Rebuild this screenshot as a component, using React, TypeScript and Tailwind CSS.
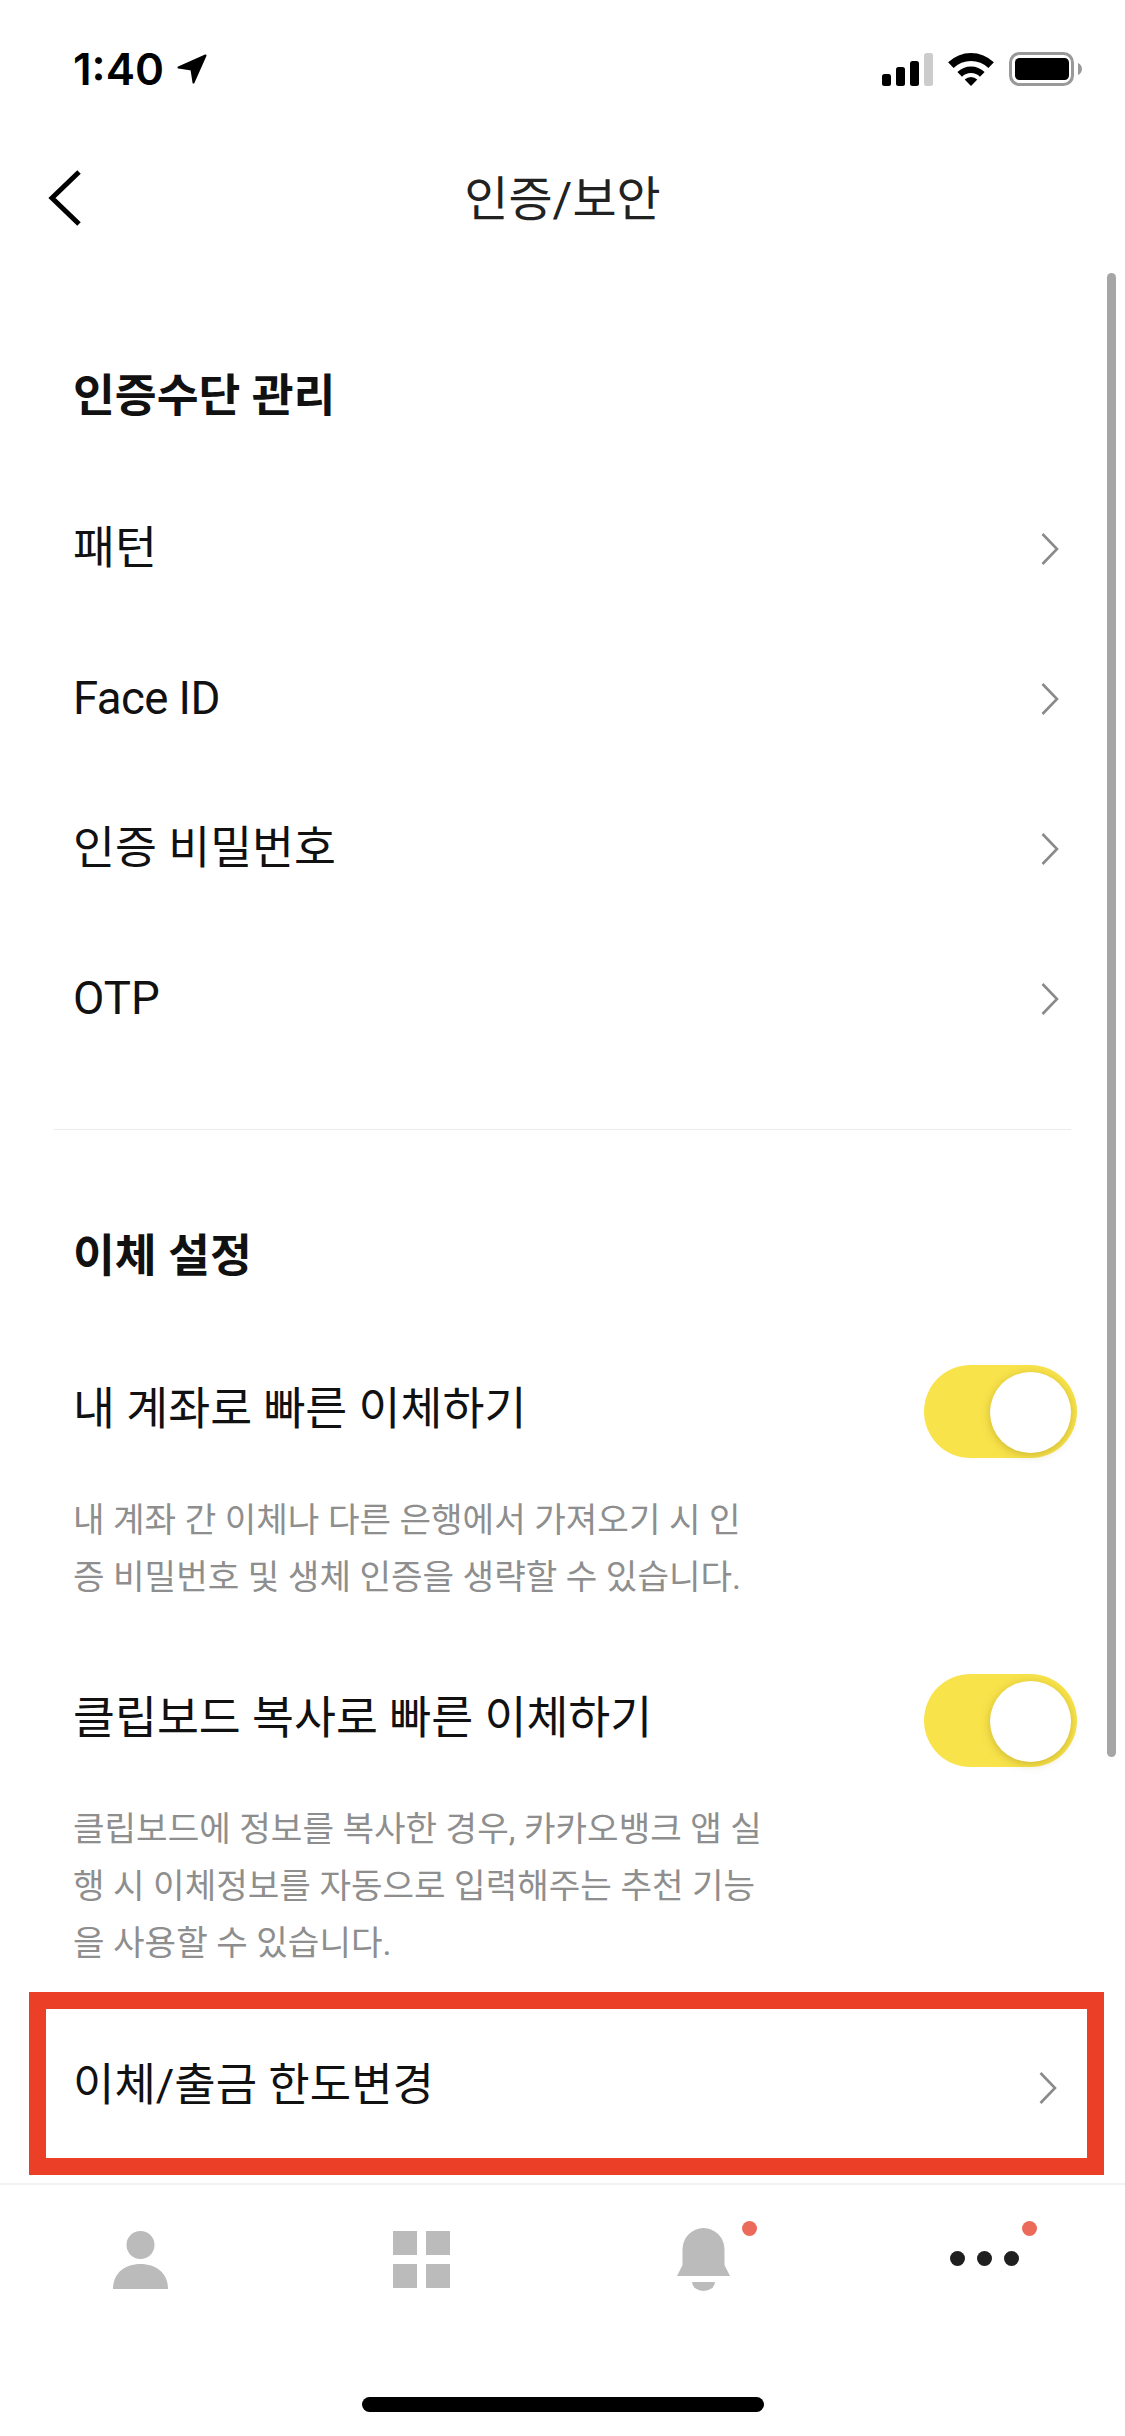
const kr = 'Roboto, "Noto Sans CJK KR", "Noto Sans", sans-serif';

function Chevron() {
  return (
    <svg width="20" height="34" viewBox="0 0 20 34" className="mt-[8px] shrink-0">
      <path d="M2.5 2 L17 17 L2.5 32" fill="none" stroke="#8a8a8a" strokeWidth="2.6" />
    </svg>
  );
}

function LinkRow({ label, tight }: { label: string; tight?: boolean }) {
  return (
    <div className="flex h-[150px] items-center justify-between pl-[73px] pr-[65px]">
      <span className={tight ? 'pt-[9px] text-[45.6px] tracking-[-0.6px] text-[#111]' : 'pt-[9px] text-[45.6px] text-[#111]'}>{label}</span>
      <Chevron />
    </div>
  );
}

function Toggle() {
  return (
    <div className="relative mt-[13px] h-[93px] w-[153px] shrink-0 rounded-full bg-[#f9e34b]">
      <div className="absolute left-[66px] top-[7px] h-[81px] w-[81px] rounded-full bg-white shadow-[0_2px_10px_rgba(120,100,0,0.35)]" />
    </div>
  );
}

function ToggleRow({ label }: { label: string }) {
  return (
    <div className="flex h-[150px] items-center justify-between pl-[73px] pr-[48px]">
      <span className="pt-[11px] text-[45.6px] text-[#111]">{label}</span>
      <Toggle />
    </div>
  );
}

function Heading({ children }: { children: string }) {
  return (
    <div className="flex h-[150px] items-center pl-[73px] pt-[4px] text-[45.5px] font-bold text-[#111]">{children}</div>
  );
}

function StatusBar() {
  return (
    <div className="flex h-[132px] items-start justify-between pl-[73px] pr-[43px] pt-[41px]">
      <div className="flex items-center gap-[13px]">
        <span className="text-[44px] font-semibold leading-[56px] text-black" style={{ fontFamily: 'Inter, sans-serif' }}>1:40</span>
        <svg width="30" height="30" viewBox="0 0 30 30">
          <path d="M28.500 1.500 L1.500 13.500 L14.500 15.500 L16.500 28.500 Z" fill="#000" stroke="#000" strokeWidth="2" strokeLinejoin="round" />
        </svg>
      </div>
      <div className="flex items-center gap-[15px] pt-[11px]">
        <svg width="51" height="33" viewBox="0 0 51 33">
          <rect x="0" y="21" width="9" height="12" rx="2.5" fill="#000" />
          <rect x="14" y="14" width="9" height="19" rx="2.5" fill="#000" />
          <rect x="28" y="8" width="9" height="25" rx="2.5" fill="#000" />
          <rect x="42" y="0" width="9" height="33" rx="2.5" fill="#ccc" />
        </svg>
        <svg width="46" height="33" viewBox="0 0 46 33">
          <path d="M0.1 9.3 A33 33 0 0 1 45.9 9.3 L40.4 15 A25 25 0 0 0 5.6 15 Z" fill="#000" />
          <path d="M9.4 19 A19.500 19.500 0 0 1 36.6 19 L32 23.700 A13 13 0 0 0 14 23.700 Z" fill="#000" />
          <path d="M16.700 26.500 A9 9 0 0 1 29.300 26.500 L23 33 Z" fill="#000" />
        </svg>
        <svg width="73" height="34" viewBox="0 0 73 34">
          <rect x="1.500" y="1.500" width="62" height="31" rx="9" fill="none" stroke="#999" strokeWidth="3" />
          <rect x="6" y="6" width="54" height="22" rx="4.500" fill="#000" />
          <path d="M69 11 C71.500 12 73 14.500 73 17 C73 19.500 71.500 22 69 23 Z" fill="#999" />
        </svg>
      </div>
    </div>
  );
}

function TabBar() {
  return (
    <div className="relative h-[253px] border-t-2 border-[#f2f2f2] bg-white">
      <div className="grid grid-cols-4 pt-[46px]">
        <div className="flex justify-center">
          <svg width="55" height="58" viewBox="0 0 55 58">
            <ellipse cx="27.500" cy="14" rx="14" ry="14" fill="#bbb" />
            <path d="M0 58 C0 42 12 33 27.500 33 C43 33 55 42 55 58 Z" fill="#bbb" />
          </svg>
        </div>
        <div className="flex justify-center">
          <div className="grid h-[57px] w-[57px] grid-cols-[24px_24px] grid-rows-[24px_24px] gap-[9px]">
            <div className="bg-[#bbb]" />
            <div className="bg-[#bbb]" />
            <div className="bg-[#bbb]" />
            <div className="bg-[#bbb]" />
          </div>
        </div>
        <div className="relative flex justify-center">
          <svg width="53" height="63" viewBox="0 0 53 63" className="-mt-[3px]">
            <path d="M5.500 21.500 A21 21.500 0 0 1 47.500 21.500 L47.500 37 L53 48 L0 48 L5.500 37 Z" fill="#bbb" />
            <path d="M15 54 L38 54 A11.500 9 0 0 1 15 54 Z" fill="#bbb" />
          </svg>
          <div className="absolute left-[179px] top-[-10px] h-[15px] w-[15px] rounded-full bg-[#ec6a5a]" />
        </div>
        <div className="relative flex justify-center">
          <div className="flex gap-[12px] pt-[20px]">
            <div className="h-[15px] w-[15px] rounded-full bg-[#1f1f1f]" />
            <div className="h-[15px] w-[15px] rounded-full bg-[#1f1f1f]" />
            <div className="h-[15px] w-[15px] rounded-full bg-[#1f1f1f]" />
          </div>
          <div className="absolute left-[178px] top-[-10px] h-[15px] w-[15px] rounded-full bg-[#ec6a5a]" />
        </div>
      </div>
      <div className="absolute bottom-[24px] left-[362px] h-[15px] w-[402px] rounded-full bg-black" />
    </div>
  );
}

export default function App() {
  return (
    <div className="relative flex h-[2436px] w-[1125px] flex-col overflow-hidden bg-white" style={{ fontFamily: kr }}>
      <StatusBar />
      <div className="relative flex h-[130px] items-center justify-center">
        <svg width="34" height="56" viewBox="0 0 34 56" className="absolute left-[48px] top-[38px]">
          <path d="M31 2 L4 28 L31 54" fill="none" stroke="#000" strokeWidth="5" />
        </svg>
        <span className="pt-[6px] text-[48px] text-[#222]">인증/보안</span>
      </div>

      <div className="flex-1 pt-[58px]">
        <Heading>인증수단 관리</Heading>
        <LinkRow label="패턴" />
        <LinkRow label="Face ID" tight />
        <LinkRow label="인증 비밀번호" />
        <LinkRow label="OTP" />
        <div className="mx-[54px] mt-[59px] h-px bg-[#ececec]" />
        <div className="mt-[50px]">
          <Heading>이체 설정</Heading>
        </div>
        <ToggleRow label="내 계좌로 빠른 이체하기" />
        <p className="mt-[12px] pl-[73px] text-[34.3px] leading-[57px] text-[#8e8e8e]">
          내 계좌 간 이체나 다른 은행에서 가져오기 시 인<br />
          증 비밀번호 및 생체 인증을 생략할 수 있습니다.
        </p>
        <div className="mt-[33px]">
          <ToggleRow label="클립보드 복사로 빠른 이체하기" />
        </div>
        <p className="mt-[12px] pl-[73px] text-[34.3px] leading-[57px] text-[#8e8e8e]">
          클립보드에 정보를 복사한 경우, 카카오뱅크 앱 실<br />
          행 시 이체정보를 자동으로 입력해주는 추천 기능<br />
          을 사용할 수 있습니다.
        </p>
        <div className="ml-[29px] mr-[21px] mt-[20px] flex h-[183px] items-center justify-between border-[17px] border-[#eb4027] pl-[27px] pr-[29px]">
          <span className="pt-[4px] text-[45px] text-[#111]">이체/출금 한도변경</span>
          <Chevron />
        </div>
      </div>

      <TabBar />
      <div className="absolute left-[1107px] top-[273px] h-[1484px] w-[9px] rounded-full bg-[#a6a6a6]" />
    </div>
  );
}
